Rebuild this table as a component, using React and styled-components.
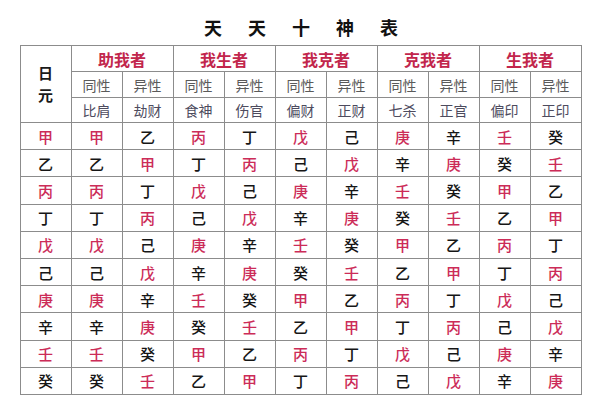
import React from 'react';
import styled, { createGlobalStyle } from 'styled-components';

const YANG = ['甲', '丙', '戊', '庚', '壬'];

const GROUPS = ['助我者', '我生者', '我克者', '克我者', '生我者'];
const GODS = ['比肩', '劫财', '食神', '伤官', '偏财', '正财', '七杀', '正官', '偏印', '正印'];

// 每一行：日元 + 十神对应的天干
const ROWS = [
  ['甲', '甲', '乙', '丙', '丁', '戊', '己', '庚', '辛', '壬', '癸'],
  ['乙', '乙', '甲', '丁', '丙', '己', '戊', '辛', '庚', '癸', '壬'],
  ['丙', '丙', '丁', '戊', '己', '庚', '辛', '壬', '癸', '甲', '乙'],
  ['丁', '丁', '丙', '己', '戊', '辛', '庚', '癸', '壬', '乙', '甲'],
  ['戊', '戊', '己', '庚', '辛', '壬', '癸', '甲', '乙', '丙', '丁'],
  ['己', '己', '戊', '辛', '庚', '癸', '壬', '乙', '甲', '丁', '丙'],
  ['庚', '庚', '辛', '壬', '癸', '甲', '乙', '丙', '丁', '戊', '己'],
  ['辛', '辛', '庚', '癸', '壬', '乙', '甲', '丁', '丙', '己', '戊'],
  ['壬', '壬', '癸', '甲', '乙', '丙', '丁', '戊', '己', '庚', '辛'],
  ['癸', '癸', '壬', '乙', '甲', '丁', '丙', '己', '戊', '辛', '庚'],
];

export default function App() {
  return (
    <>
      <GlobalStyle />
      <Page>
        <Title>
          {'天天十神表'.split('').map((c, i) => (
            <span key={i}>{c}</span>
          ))}
        </Title>
        <Table>
          <tbody>
            <HeadRow $h={26}>
              <RiYuan rowSpan={3}>日<br />元</RiYuan>
              {GROUPS.map((g) => (
                <GroupCell key={g} colSpan={2}>{g}</GroupCell>
              ))}
            </HeadRow>
            <HeadRow $h={26}>
              {GROUPS.map((g) => (
                <React.Fragment key={g}>
                  <SubCell>同性</SubCell>
                  <SubCell>异性</SubCell>
                </React.Fragment>
              ))}
            </HeadRow>
            <HeadRow $h={25}>
              {GODS.map((g) => (
                <SubCell key={g} $god>{g}</SubCell>
              ))}
            </HeadRow>
            {ROWS.map((row, r) => (
              <DataRow key={r}>
                {row.map((s, i) => (
                  <StemCell key={i} $yang={YANG.includes(s)}>{s}</StemCell>
                ))}
              </DataRow>
            ))}
          </tbody>
        </Table>
      </Page>
    </>
  );
}

const GlobalStyle = createGlobalStyle`
  html, body {
    margin: 0;
    background: #ffffff;
  }
  body {
    font-family: "Noto Sans CJK SC", "Noto Sans", sans-serif;
  }
`;

const Page = styled.div`
  width: 600px;
  height: 400px;
  padding-top: 15px;
  box-sizing: border-box;
  display: flex;
  flex-direction: column;
  align-items: center;
`;

const Title = styled.div`
  display: flex;
  justify-content: center;
  gap: 26px;
  height: 30px;
  line-height: 24px;
  font-size: 18px;
  font-weight: 700;
  color: #111;
  padding-left: 2px;
`;

const Table = styled.table`
  width: 562px;
  table-layout: fixed;
  border-collapse: collapse;
  border: 1.5px solid #6f6f6f;
  margin-left: 1px;

  td {
    border: 1px solid #8c8c8c;
    text-align: center;
    vertical-align: middle;
    padding: 0;
  }
`;

const HeadRow = styled.tr`
  height: ${(p) => p.$h}px;
`;

const DataRow = styled.tr`
  height: 27.2px;
`;

const RiYuan = styled.td`
  font-size: 15px;
  font-weight: 700;
  line-height: 22px;
  color: #1a1a1a;
`;

const GroupCell = styled.td`
  font-size: 16px;
  font-weight: 700;
  color: #c2264c;
`;

const SubCell = styled.td`
  font-size: 14px;
  color: ${(p) => (p.$god ? '#4d4b5e' : '#5a5a5a')};
`;

const StemCell = styled.td`
  font-size: 15px;
  font-weight: 500;
  color: ${(p) => (p.$yang ? '#cc2c58' : '#161616')};
`;
